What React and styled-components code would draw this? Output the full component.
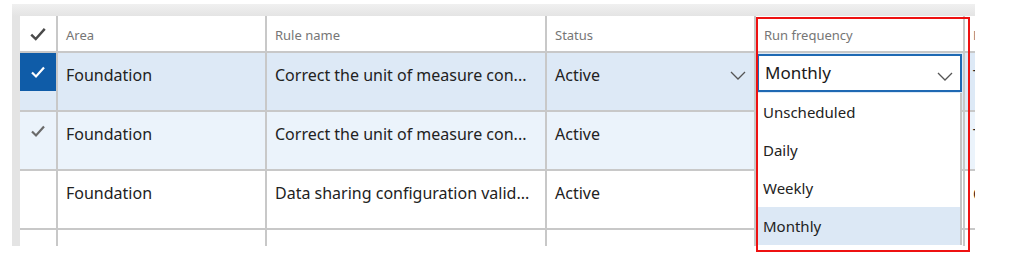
import styled, { createGlobalStyle } from "styled-components";

const GlobalStyle = createGlobalStyle`
  body {
    margin: 0;
    background: #ffffff;
    font-family: "Noto Sans", "Open Sans", sans-serif;
  }
`;

const COLS = "38px 209px 280px 209px 209px 140px";

const Stage = styled.div`
  position: relative;
  width: 1024px;
  height: 266px;
`;

const Frame = styled.div`
  margin: 4px 0 0 12px;
  width: 963px;
  height: 242px;
  padding: 12px 0 0 8px;
  box-sizing: border-box;
  background: linear-gradient(#f0f0f0, #e4e4e4 12px);
  overflow: hidden;
`;

const Grid = styled.div`
  background: #ffffff;
  width: 1100px;
`;

const Row = styled.div`
  display: grid;
  grid-template-columns: ${COLS};
  height: ${(p) => (p.$head ? "37px" : "59px")};
  background: ${(p) =>
    p.$tone === "selected" ? "#dde9f6" : p.$tone === "hover" ? "#ebf3fb" : "#ffffff"};
`;

const Cell = styled.div`
  position: relative;
  box-sizing: border-box;
  border-right: 2px solid #c8c8c8;
  border-bottom: 2px solid #c8c8c8;
  padding: ${(p) => (p.$head ? "8px 8px 0 8px" : "11px 8px 0 8px")};
  font-size: ${(p) => (p.$head ? "13px" : "16px")};
  color: ${(p) => (p.$head ? "#767676" : "#222222")};
  white-space: nowrap;
  overflow: ${(p) => (p.$open ? "visible" : "hidden")};
  text-overflow: ellipsis;
  display: flex;
  justify-content: space-between;
  align-items: flex-start;
  line-height: 22px;
`;

const Wrap = styled.div`
  white-space: normal;
  font-size: 16px;
  line-height: 24px;
`;

const CheckCell = styled.div`
  box-sizing: border-box;
  border-right: 2px solid #c8c8c8;
  border-bottom: 2px solid #c8c8c8;
`;

const CheckBox = styled.div`
  height: ${(p) => (p.$head ? "35px" : "38px")};
  display: flex;
  align-items: center;
  justify-content: center;
  background: ${(p) => (p.$on ? "#0f5ca8" : "transparent")};
  color: ${(p) => (p.$on ? "#ffffff" : p.$head ? "#4a4a4a" : "#6a6a6a")};
`;

const Chevron = styled.svg`
  width: 16px;
  height: 9px;
  margin-top: 7px;
  flex: none;
`;

const Select = styled.div`
  position: relative;
  margin: -10px -7px 0 -7px;
  height: 38px;
  box-sizing: border-box;
  border: 2px solid #1f69b3;
  background: #ffffff;
  display: flex;
  align-items: center;
  justify-content: space-between;
  padding: 0 7px 0 6px;
  font-size: 17px;
  color: #1a1a1a;
  flex: 1;
`;

const List = styled.div`
  position: absolute;
  left: -2px;
  right: -2px;
  top: 37px;
  background: #ffffff;
  border-right: 2px solid #c4c4c4;
  z-index: 2;
`;

const Option = styled.div`
  height: 38px;
  display: flex;
  align-items: center;
  padding-left: 6px;
  font-size: 15px;
  color: #222222;
  background: ${(p) => (p.$active ? "#dce8f5" : "#ffffff")};
`;

const Highlight = styled.div`
  position: absolute;
  left: 756px;
  top: 13px;
  width: 214px;
  height: 235px;
  box-sizing: border-box;
  border: 2px solid #ee1111;
  pointer-events: none;
  z-index: 3;
`;

const Check = ({ size = 16 }) => (
  <svg width={size} height={size} viewBox="0 0 16 16">
    <polyline points="2,8.5 6,12.5 14,3.5" fill="none" stroke="currentColor" strokeWidth="2.2" />
  </svg>
);

const Down = () => (
  <Chevron viewBox="0 0 16 9">
    <polyline points="1,1 8,8 15,1" fill="none" stroke="#555555" strokeWidth="1.3" />
  </Chevron>
);

const rows = [
  { area: "Foundation", rule: "Correct the unit of measure con...", status: "Active", tone: "selected", check: "on", extra: "Th" },
  { area: "Foundation", rule: "Correct the unit of measure con...", status: "Active", tone: "hover", check: "gray", extra: "Th" },
  { area: "Foundation", rule: "Data sharing configuration valid...", status: "Active", tone: "", check: "", extra: "Co" },
  { area: "Foundation", rule: "Extended product master valida...", status: "Active", tone: "", check: "", extra: "Pr" },
];

const options = ["Unscheduled", "Daily", "Weekly", "Monthly"];

export default function App() {
  return (
    <Stage>
      <GlobalStyle />
      <Frame>
        <Grid>
          <Row $head>
            <CheckCell>
              <CheckBox $head>
                <Check size={18} />
              </CheckBox>
            </CheckCell>
            <Cell $head>Area</Cell>
            <Cell $head>Rule name</Cell>
            <Cell $head>Status</Cell>
            <Cell $head>Run frequency</Cell>
            <Cell $head>Rule</Cell>
          </Row>
          {rows.map((r, i) => (
            <Row key={i} $tone={r.tone}>
              <CheckCell>
                <CheckBox $on={r.check === "on"}>{r.check && <Check />}</CheckBox>
              </CheckCell>
              <Cell>{r.area}</Cell>
              <Cell>{r.rule}</Cell>
              <Cell>
                <span>{r.status}</span>
                {i === 0 && <Down />}
              </Cell>
              <Cell $open={i === 0}>
                {i === 0 ? (
                  <Select>
                    <span>Monthly</span>
                    <Down />
                    <List>
                      {options.map((o) => (
                        <Option key={o} $active={o === "Monthly"}>
                          {o}
                        </Option>
                      ))}
                    </List>
                  </Select>
                ) : (
                  "Monthly"
                )}
              </Cell>
              <Cell>
                <Wrap>{r.extra} un</Wrap>
              </Cell>
            </Row>
          ))}
        </Grid>
      </Frame>
      <Highlight />
    </Stage>
  );
}
